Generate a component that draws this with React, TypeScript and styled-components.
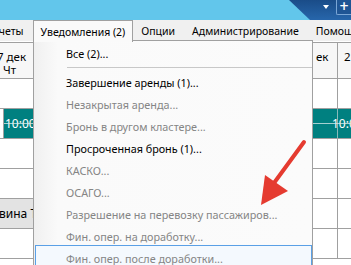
import React from "react";
import styled, { createGlobalStyle } from "styled-components";

const Global = createGlobalStyle`
  html, body { margin: 0; padding: 0; overflow: hidden; background: #fff; }
  body { font-family: "Noto Sans", "Open Sans", sans-serif; font-size: 11px; }
`;

const Root = styled.div`
  position: relative;
  width: 351px;
  height: 265px;
  overflow: hidden;
  background: #fff;
`;

const TitleBar = styled.div`
  height: 20px;
  background: #62c6eb;
  display: flex;
  justify-content: flex-end;
`;

const WindowTab = styled.div`
  width: 62px;
  height: 20px;
  background: linear-gradient(180deg, #1a4c88 0%, #2766ab 100%);
  clip-path: polygon(0 0, 100% 0, 100% 100%, 21px 100%);
  display: flex;
  align-items: flex-start;
  justify-content: flex-end;
  gap: 7px;
`;

const DownTri = styled.div`
  width: 0;
  height: 0;
  margin-top: 5px;
  border-left: 3.5px solid transparent;
  border-right: 3.5px solid transparent;
  border-top: 4px solid #fff;
`;

const PlusBox = styled.div`
  width: 14px;
  height: 14px;
  border: 1px solid #7aa6d6;
  border-right: none;
  border-top: none;
  border-radius: 0 0 0 2px;
  color: #fff;
  font-family: "DejaVu Sans", sans-serif;
  font-weight: bold;
  font-size: 12px;
  line-height: 13px;
  text-align: center;
  background: #1f5594;
`;

const MenuBar = styled.div`
  height: 21px;
  background: #f0f0f0;
  display: flex;
  align-items: stretch;
  white-space: nowrap;
  font-size: 10.5px;
`;

const MenuItem = styled.div<{ $open?: boolean; $shift?: number }>`
  position: relative;
  display: flex;
  align-items: center;
  padding: ${(p) => (p.$open ? "0 7px 0 7px" : "0 9px 0 8px")};
  margin-left: ${(p) => p.$shift ?? 0}px;
  color: #000;
  ${(p) =>
    p.$open &&
    `
    z-index: 3;
    background: #fafafa;
    border: 1px solid #a0a0a0;
    border-bottom: none;
    box-sizing: border-box;
    margin-bottom: -1px;
    height: 22px;
  `}
`;

const Grid = styled.div`
  margin-top: 1px;
  display: grid;
  grid-template-columns: 34px 279px 25px 40px;
  grid-template-rows: 36px repeat(6, 30px);
  border-top: 1px solid #a0a0a0;
`;

const Cell = styled.div<{ $bg?: string; $span?: number }>`
  position: relative;
  box-sizing: border-box;
  border-right: 1px solid #a0a0a0;
  border-bottom: 1px solid #a0a0a0;
  background: ${(p) => p.$bg ?? "#fff"};
  overflow: hidden;
  white-space: nowrap;
  grid-column: ${(p) => (p.$span ? `span ${p.$span}` : "auto")};
`;

const HeadCell = styled(Cell)<{ $pad?: number }>`
  background: #f7f7f7;
  padding: 7px 0 0 ${(p) => p.$pad ?? 0}px;
  line-height: 13px;
  font-size: 11.5px;
  color: #000;
`;

const HeadLine = styled.div<{ $shift?: number }>`
  margin-left: ${(p) => p.$shift ?? 0}px;
`;

const TealBlock = styled.div<{ $left?: number; $pad?: number }>`
  position: absolute;
  top: 0;
  bottom: 0;
  left: ${(p) => p.$left ?? 0}px;
  right: 0;
  background: #008080;
  color: #fff;
  font-size: 12px;
  display: flex;
  align-items: center;
  padding-left: ${(p) => p.$pad ?? 0}px;
  border-left: ${(p) => (p.$left ? "1px solid #a0a0a0" : "none")};
  &::after {
    content: "";
    position: absolute;
    left: 0;
    right: 0;
    top: 14px;
    height: 1px;
    background: rgba(220, 235, 235, 0.75);
  }
`;

const GridDivider = styled.div<{ $x: number }>`
  position: absolute;
  top: 0;
  bottom: 0;
  left: ${(p) => p.$x}px;
  width: 1px;
  background: rgba(170, 200, 200, 0.8);
`;

const GrayText = styled.div`
  height: 100%;
  display: flex;
  align-items: center;
  margin-left: -1px;
  font-size: 12px;
  color: #000;
`;

const Dropdown = styled.div`
  position: absolute;
  z-index: 2;
  left: 33px;
  top: 40px;
  width: 280px;
  height: 240px;
  box-sizing: border-box;
  border: 1px solid #a0a0a0;
  background: linear-gradient(90deg, #f0f0f0 0px, #fafafa 24px, #fbfbfb 100%);
  padding-top: 1px;
  display: flex;
  flex-direction: column;
  font-size: 10.8px;
`;

const DropItem = styled.div<{ $disabled?: boolean; $hover?: boolean }>`
  height: 22px;
  flex: none;
  display: flex;
  align-items: center;
  padding-left: 31px;
  margin: 0 0 0 1px;
  box-sizing: border-box;
  white-space: nowrap;
  color: ${(p) => (p.$disabled ? "#858585" : "#000")};
  ${(p) =>
    p.$hover &&
    `
    border: 1px solid #5aa0e6;
    background: #f4f9fe;
    padding-left: 30px;
    margin-top: -2px;
    height: 26px;
  `}
`;

const Separator = styled.div`
  flex: none;
  height: 7px;
  margin-left: 33px;
  display: flex;
  align-items: center;
  &::before {
    content: "";
    flex: 1;
    height: 1px;
    background: #c8c8c8;
  }
`;

const ArrowSvg = styled.svg`
  position: absolute;
  z-index: 5;
  left: 0;
  top: 0;
  pointer-events: none;
`;

const items: { text: string; disabled?: boolean; sepAfter?: boolean; hover?: boolean }[] = [
  { text: "Все (2)...", sepAfter: true },
  { text: "Завершение аренды (1)..." },
  { text: "Незакрытая аренда...", disabled: true },
  { text: "Бронь в другом кластере...", disabled: true },
  { text: "Просроченная бронь (1)..." },
  { text: "КАСКО...", disabled: true },
  { text: "ОСАГО...", disabled: true },
  { text: "Разрешение на перевозку пассажиров...", disabled: true },
  { text: "Фин. опер. на доработку...", disabled: true },
  { text: "Фин. опер. после доработки...", disabled: true, hover: true },
];

export default function App() {
  return (
    <Root>
      <Global />
      <TitleBar>
        <WindowTab>
          <DownTri />
          <PlusBox>+</PlusBox>
        </WindowTab>
      </TitleBar>
      <MenuBar>
        <MenuItem $shift={-22}>Отчеты</MenuItem>
        <MenuItem $open>Уведомления (2)</MenuItem>
        <MenuItem>Опции</MenuItem>
        <MenuItem>Администрирование</MenuItem>
        <MenuItem>Помощь</MenuItem>
      </MenuBar>
      <Grid>
        <HeadCell>
          <HeadLine $shift={-3}>7 дек</HeadLine>
          <HeadLine $shift={3}>Чт</HeadLine>
        </HeadCell>
        <HeadCell />
        <HeadCell $pad={3}>ек</HeadCell>
        <HeadCell $pad={6}>2</HeadCell>

        <Cell />
        <Cell />
        <Cell />
        <Cell />

        <Cell>
          <TealBlock $left={3} $pad={1}>10:00</TealBlock>
        </Cell>
        <Cell />
        <Cell $span={2}>
          <TealBlock $pad={19}>
            10:00
            <GridDivider $x={24} />
          </TealBlock>
        </Cell>

        <Cell />
        <Cell />
        <Cell />
        <Cell />

        <Cell />
        <Cell />
        <Cell />
        <Cell />

        <Cell $bg="#e3e3e3">
          <GrayText>вина Т</GrayText>
        </Cell>
        <Cell />
        <Cell />
        <Cell />

        <Cell />
        <Cell />
        <Cell />
        <Cell />
      </Grid>

      <Dropdown>
        {items.map((it) => (
          <React.Fragment key={it.text}>
            <DropItem $disabled={it.disabled} $hover={it.hover}>
              {it.text}
            </DropItem>
            {it.sepAfter && <Separator />}
          </React.Fragment>
        ))}
      </Dropdown>

      <ArrowSvg width="351" height="265" viewBox="0 0 351 265">
        <line x1="304" y1="142" x2="274" y2="183" stroke="#e53b30" strokeWidth="4" strokeLinecap="round" />
        <polygon points="261,205 265,175 288,191" fill="#e53b30" />
      </ArrowSvg>
    </Root>
  );
}
